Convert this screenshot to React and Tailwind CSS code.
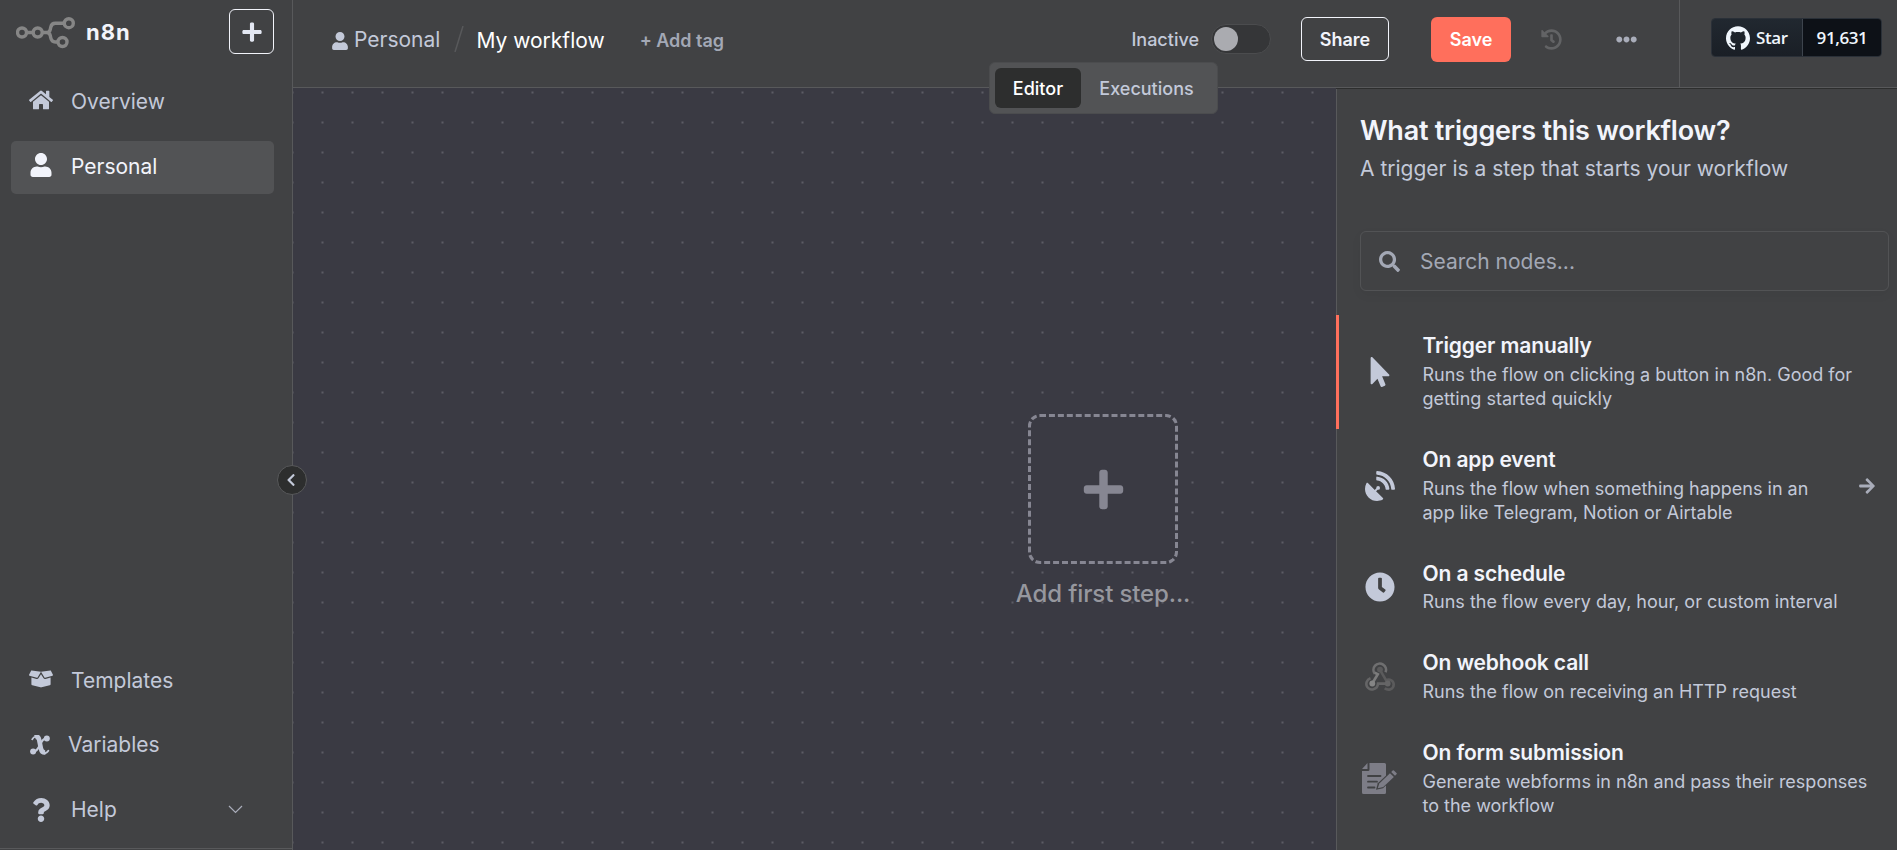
import React from 'react'
import {
  FaArrowRight,
  FaBoxOpen,
  FaChevronLeft,
  FaClock,
  FaEllipsisH,
  FaHistory,
  FaHome,
  FaMousePointer,
  FaPlus,
  FaQuestion,
  FaSatelliteDish,
  FaSearch,
  FaUser,
} from 'react-icons/fa'
import { SiGithub } from 'react-icons/si'

function Logo() {
  return (
    <svg width="60" height="32" viewBox="0 0 60 32" fill="none" stroke="#868686" strokeWidth="3.4">
      <circle cx="6" cy="15.5" r="4.5" />
      <circle cx="21.7" cy="15.5" r="4.5" />
      <circle cx="52.8" cy="6.2" r="4.5" />
      <circle cx="46.5" cy="25" r="4.5" />
      <path d="M10.5 15.5h6.7M26.2 15.5h4.3c2 0 3.4-1.3 3.8-3.2l.4-2c.5-2.5 2-4.1 4.6-4.1h9M30.5 15.5c2 0 3.4 1.3 3.8 3.2l.4 2c.5 2.5 2 4.3 4.6 4.3h2.7" />
    </svg>
  )
}

function VariableIcon() {
  return (
    <svg width="20" height="20" viewBox="0 0 20 20" fill="none" stroke="currentColor" strokeLinecap="round">
      <path d="M5 2.4C8 1 8.700 2.500 9.200 5l1.700 8.500c.5 2.600 1.600 4.200 4.400 4" strokeWidth="4.6" strokeLinecap="butt" />
      <path d="M17 3.5c-3.500-.6-5.200 2.500-6.800 6S6.500 17 3 16.500" strokeWidth="2.2" />
      <path d="M2.200 4.300C3 2.600 4.300 1.700 6 1.600M14 18.300c2 0 3.500-.8 4.400-2.600" strokeWidth="1.8" />
      <circle cx="16.800" cy="3.5" r="3" fill="currentColor" stroke="none" />
      <circle cx="3.100" cy="16.500" r="3" fill="currentColor" stroke="none" />
    </svg>
  )
}

function WebhookIcon() {
  return (
    <svg width="30" height="30" viewBox="0 0 30 30" fill="none" strokeWidth="2.6">
      <path d="M9.8 11.8a6.300 6.300 0 1 1 10.800-1.500" stroke="#6f6f70" />
      <path d="M7.500 21 12.800 12.200 9.800 10.800" stroke="#7c7c7c" />
      <path d="M15 7.800l6 10.400c4-1.800 7.700.8 7.700 4.400 0 4.600-5.400 6.600-9 3.600" stroke="#5b5b5c" />
      <path d="M5.500 16.300c-3.800 1.400-5.200 5.300-3.300 8.600 2.800 4.300 10.300 2.900 10.800-3.300h9" stroke="#656566" />
      <circle cx="15" cy="7.600" r="2.900" fill="#5b5b5c" />
      <circle cx="7.300" cy="21.500" r="2.900" fill="#858585" />
      <circle cx="22.700" cy="21.500" r="2.900" fill="#656566" />
    </svg>
  )
}

function FormIcon() {
  return (
    <svg width="35" height="31" viewBox="0 0 35 31" fill="none" className="shrink-0">
      <path d="M7.500 0H22.500a1.500 1.500 0 0 1 1.500 1.500v28a1.500 1.500 0 0 1-1.500 1.500h-21A1.500 1.500 0 0 1 0 29.500V8h6a1.500 1.500 0 0 0 1.500-1.500z" fill="#7d7d87" />
      <path d="M5.500 0v6H0z" fill="#7d7d87" />
      <path d="M6 13h12.500M6 18.700h9M6 24.500h6.500" stroke="#414244" strokeWidth="1.8" strokeLinecap="round" />
      <path d="M14 26.800l1.800-6.500L30.500 6.500l5 4.800L21 25.300z" fill="#414244" />
      <path d="M15.800 25.200l1.500-4.600L28 10.300l3.900 3.800-10.700 9.800z" fill="#7d7d87" />
      <path d="M29.200 9.100l1.500-1.600q.6-.6 1.200 0l2.600 2.600q.6.600 0 1.200l-1.500 1.500z" fill="#7d7d87" />
    </svg>
  )
}

function NavItem({ icon, label, active, wide, children }) {
  return (
    <div
      className={`flex h-[53px] items-center rounded-[5px] pl-[18px] pr-[31px] text-[21px] ${
        active ? 'bg-[#525355] text-[#f2f4fb]' : 'text-[#c3c9d9]'
      }`}
    >
      <span className={`mr-[18px] flex shrink-0 justify-center ${wide ? 'w-[21px]' : 'w-[24px]'}`}>{icon}</span>
      <span className="flex-1">{label}</span>
      {children}
    </div>
  )
}

function Sidebar() {
  return (
    <aside className="relative flex w-[293px] shrink-0 flex-col border-r border-[#58595b] bg-[#414244]">
      <div className="flex h-[64px] items-start justify-between pl-4 pr-[18px] pt-[9px]">
        <div className="flex items-start gap-[10px] pt-[8px]">
          <Logo />
          <span className="-mt-px text-[22px] font-bold leading-8 tracking-[1px] text-[#f2f4fb]">n8n</span>
        </div>
        <button className="flex size-[45px] items-center justify-center rounded-[6px] border border-[#f2f4fb] text-[#e3e7f2]">
          <FaPlus size={22} />
        </button>
      </div>

      <nav className="flex flex-1 flex-col gap-3 pl-[11px] pr-[18px] pt-3">
        <NavItem icon={<FaHome size={24} className="mb-[5px]" />} label={<span className="block pb-[2px]">Overview</span>} />
        <NavItem icon={<FaUser size={24} className="mb-[5px]" />} label={<span className="block pb-[2px]">Personal</span>} active />
      </nav>

      <nav className="flex flex-col gap-3 border-b border-[#58595b] pb-3 pl-[11px] pr-[18px]">
        <NavItem icon={<FaBoxOpen size={24} className="mb-px" />} label={<span className="block pt-[2px]">Templates</span>} />
        <NavItem icon={<VariableIcon />} label="Variables" wide />
        <NavItem icon={<FaQuestion size={24} />} label="Help">
          <svg width="15" height="9" viewBox="0 0 15 9" fill="none" stroke="#a9adba" strokeWidth="1.2">
            <path d="M1 1l6.500 6.500L14 1" />
          </svg>
        </NavItem>
      </nav>
      <div className="h-px" />

      {/* Collapse handle sitting on the border */}
      <button className="absolute -right-[15px] top-[465px] z-20 flex size-[30px] items-center justify-center rounded-full border border-[#58595b] bg-[#2d2e2e] text-[#c3c9d9]">
        <FaChevronLeft size={14} className="mr-[3px]" />
      </button>
    </aside>
  )
}

function Header() {
  return (
    <header className="relative flex h-[88px] shrink-0 border-b border-[#58595b] bg-[#414244] shadow-[0_1px_0_#2d2e2e]">
      <div className="flex flex-1 items-center pb-[9px] pl-[38px] text-[21px] text-[#c3c9d9]">
        <FaUser size={18} className="mt-[3px]" />
        <span className="ml-[5px] mt-[2px]">Personal</span>
        <svg width="10" height="26" viewBox="0 0 10 26" className="ml-[14px]">
          <path d="M1 26L9 0" stroke="#58595b" strokeWidth="1.5" />
        </svg>
        <span className="ml-[12px] mt-[4px] text-[#ffffff]">My workflow</span>
        <span className="ml-[35px] mt-[2px] text-[18px] font-semibold text-[#a3a8b5]">+ Add tag</span>
      </div>

      <div className="flex items-start pt-[17px] text-[18px]">
        <span className="mr-3 leading-[45px] font-medium text-[#c3c9d9]">Inactive</span>
        <span className="mt-[7px] flex h-[30px] w-[60px] items-center rounded-full border border-[#4b4c4e] bg-[#353638] pl-[2px]">
          <span className="size-[24px] rounded-full bg-[#aaabb0]" />
        </span>
        <button className="ml-[30px] h-[44px] w-[88px] rounded-[6px] border border-[#f2f4fb] font-semibold text-[#f2f4fb]">Share</button>
        <button className="ml-[42px] h-[45px] w-[80px] rounded-[6px] bg-[#ff6f5c] font-semibold text-white">Save</button>
        <FaHistory size={21} className="ml-[30px] mt-3 text-[#626365]" />
        <FaEllipsisH size={21} className="ml-[54px] mt-3 text-[#a9adba]" />
      </div>

      <div className="ml-[42px] w-[218px] border-l border-[#58595b] pl-[31px] pt-[18px]">
        <div className="flex h-[39px] w-[171px] overflow-hidden rounded-[4px] border border-[#2a3038] font-['Open_Sans',sans-serif] text-[17px] font-semibold tracking-[-0.4px] text-[#f0f6fc]">
          <span className="flex w-[90px] items-center bg-linear-to-b from-[#212830] to-[#1a1f26] pl-[14px]">
            <SiGithub size={24} className="mr-[6px]" />
            Star
          </span>
          <span className="flex flex-1 items-center justify-center border-l border-[#3d444d] bg-[#0d1117]">91,631</span>
        </div>
      </div>

      {/* Editor / Executions switch overlaps the header's lower edge */}
      <div className="absolute left-[696px] top-[62px] z-10 flex h-[52px] w-[229px] rounded-[6px] border border-[#4b4c4e] bg-[#525355] p-[5px] text-[18px] font-medium">
        <span className="flex h-10 w-[86px] items-center justify-center rounded-[6px] bg-[#2d2e2e] text-white">Editor</span>
        <span className="flex flex-1 items-center justify-center text-[#c3c9d9]">Executions</span>
      </div>
    </header>
  )
}

function Canvas() {
  return (
    <main className="relative flex-1 overflow-hidden bg-[#3a3a43]">
      <svg className="absolute inset-0 size-full">
        <pattern id="dots" x="14.5" y="-10.5" width="30" height="30" patternUnits="userSpaceOnUse">
          <circle cx="15" cy="15" r="0.9" fill="#6c6c76" />
        </pattern>
        <rect width="100%" height="100%" fill="url(#dots)" />
      </svg>
      <div className="absolute left-[723px] top-[326px] flex w-[174px] flex-col items-center">
        <div className="flex size-[150px] items-center justify-center rounded-[12px] border-[3px] border-dashed border-[#868692] bg-[#3a3a43] text-[#868692]">
          <FaPlus size={45} />
        </div>
        <span className="mt-3 whitespace-nowrap text-[24px] font-medium leading-9 tracking-[-0.12px] text-[#96979e]">Add first step...</span>
      </div>
    </main>
  )
}

const TRIGGERS = [
  {
    title: 'Trigger manually',
    text: 'Runs the flow on clicking a button in n8n. Good for getting started quickly',
    icon: <FaMousePointer size={30} className="mt-px" />,
    active: true,
  },
  {
    title: 'On app event',
    text: 'Runs the flow when something happens in an app like Telegram, Notion or Airtable',
    icon: <FaSatelliteDish size={30} className="mt-px" />,
    arrow: true,
  },
  {
    title: 'On a schedule',
    text: 'Runs the flow every day, hour, or custom interval',
    icon: <FaClock size={30} />,
  },
  {
    title: 'On webhook call',
    text: 'Runs the flow on receiving an HTTP request',
    icon: <WebhookIcon />,
  },
  {
    title: 'On form submission',
    text: 'Generate webforms in n8n and pass their responses to the workflow',
    icon: <FormIcon />,
  },
]

function TriggerItem({ title, text, icon, arrow, active }) {
  return (
    <div
      className={`-ml-px flex items-center border-l-[3px] pb-[17.6px] pl-[22.5px] pt-[17px] ${
        active ? 'border-[#ff6f5c]' : 'border-transparent'
      }`}
    >
      <span className="mr-[25px] flex w-[36px] shrink-0 justify-center text-[#c3c9d9]">{icon}</span>
      <div className={arrow ? 'w-[400px]' : 'w-[452px]'}>
        <h3 className="text-[21px] font-semibold leading-[28px] tracking-[-0.13px] text-[#f2f4fb]">{title}</h3>
        <p className="mt-[2.8px] text-[18px] leading-[24.2px] text-[#c3c9d9]">{text}</p>
      </div>
      {arrow && <FaArrowRight size={18} className="ml-[35px] mt-[2px] text-[#a9adba]" />}
    </div>
  )
}

function TriggerPanel() {
  return (
    <section className="w-[561px] shrink-0 border-l border-[#58595b] bg-[#414244]">
      <div className="pl-[23px] pt-[25px]">
        <h2 className="text-[27px] font-semibold leading-9 tracking-[-0.22px] text-[#f2f4fb]">What triggers this workflow?</h2>
        <p className="mt-1 text-[21px] leading-8 text-[#c3c9d9]">A trigger is a step that starts your workflow</p>
      </div>
      <div className="ml-[23px] mr-2 mt-[46px] flex h-[60px] items-center rounded-[6px] border border-[#525355] pl-[18px] text-[21px] text-[#a3a8b5] shadow-[0_4px_12px_rgba(0,0,0,0.04)]">
        <FaSearch size={21} />
        <span className="ml-5 mt-[2px]">Search nodes...</span>
      </div>
      <div className="mt-6">
        {TRIGGERS.map((item) => (
          <TriggerItem key={item.title} {...item} />
        ))}
      </div>
    </section>
  )
}

export default function App() {
  return (
    <div className="flex h-[850px] w-full overflow-hidden bg-[#414244] font-['Inter',sans-serif]">
      <Sidebar />
      <div className="flex min-w-0 flex-1 flex-col">
        <Header />
        <div className="flex min-h-0 flex-1">
          <Canvas />
          <TriggerPanel />
        </div>
      </div>
    </div>
  )
}
